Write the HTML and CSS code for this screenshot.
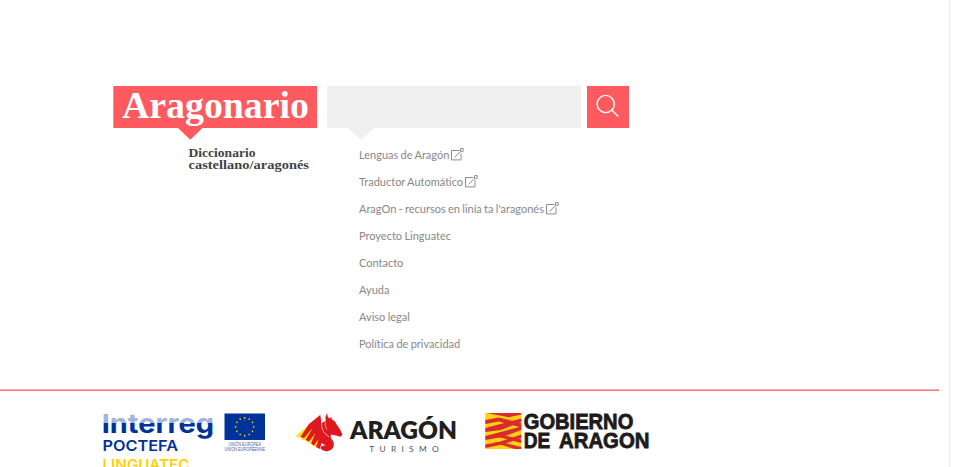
FILE: index.html
```html
<!DOCTYPE html>
<html lang="es">
<head>
<meta charset="utf-8">
<title>Aragonario</title>
<link rel="stylesheet" href="styles.css">
</head>
<body>
<svg class="defs" width="0" height="0" aria-hidden="true">
  <symbol id="external" viewBox="0 0 13 13">
    <path d="M8.300 2.500H.5v9.400h9.500V5.300M3.600 9.300 9.700 3.300M9.500.6h2.700v2.700H9.500z" fill="none" stroke="currentColor" stroke-width=".95"/>
  </symbol>
</svg>
<div class="page">
  <header class="search">
    <svg class="brand" viewBox="0 0 204 90" role="img">
      <path class="red" d="M.3 0H204v42h-114.500L77.300 53.700 65 42H.3z"/>
      <text class="brand-name" x="9" y="31.500" textLength="187" lengthAdjust="spacingAndGlyphs">Aragonario</text>
      <text class="brand-sub" x="75.500" y="70.500" textLength="67" lengthAdjust="spacingAndGlyphs">Diccionario</text>
      <text class="brand-sub" x="75.500" y="83.200" textLength="120.500" lengthAdjust="spacingAndGlyphs">castellano/aragonés</text>
    </svg>
    <div class="field">
      <input class="query" type="text" aria-label="Buscar">
      <svg class="pointer" viewBox="0 0 26 12"><path d="M0 0h26L13 12z"/></svg>
      <nav class="menu">
        <a>Lenguas de Aragón <svg class="ext"><use href="#external"/></svg></a>
        <a>Traductor Automático <svg class="ext"><use href="#external"/></svg></a>
        <a>AragOn - recursos en linía ta l'aragonés <svg class="ext"><use href="#external"/></svg></a>
        <a>Proyecto Linguatec</a>
        <a>Contacto</a>
        <a>Ayuda</a>
        <a>Aviso legal</a>
        <a>Política de privacidad</a>
      </nav>
    </div>
    <button class="submit" aria-label="Buscar">
      <svg viewBox="0 0 42 42"><circle cx="18.700" cy="18" r="8.600"/><path d="m25 24.200 6.300 6.400"/></svg>
    </button>
  </header>
  <footer class="sponsors">
    <svg class="interreg" viewBox="0 0 164 60">
      <defs><linearGradient id="two" gradientUnits="userSpaceOnUse" x1="0" y1="0" x2="0" y2="40"><stop offset=".24" stop-color="#a5b2dc"/><stop offset=".24" stop-color="#039"/></linearGradient></defs>
      <text class="inter" x="-1.300" y="19.700" textLength="112.300" lengthAdjust="spacingAndGlyphs" fill="url(#two)">Interreg</text>
      <text class="program" x="-.5" y="38" textLength="75.500" lengthAdjust="spacingAndGlyphs">POCTEFA</text>
      <text class="program yellow" x="-.5" y="56.700" textLength="87" lengthAdjust="spacingAndGlyphs">LINGUATEC</text>
      <path fill="#039" d="M121.500.5h40.500v26.500h-40.500z"/>
      <g fill="#fc0"><circle cx="141.700" cy="4.900" r=".85"/><circle cx="146.200" cy="6.100" r=".85"/><circle cx="149.500" cy="9.300" r=".85"/><circle cx="150.700" cy="13.800" r=".85"/><circle cx="149.500" cy="18.300" r=".85"/><circle cx="146.200" cy="21.500" r=".85"/><circle cx="141.700" cy="22.700" r=".85"/><circle cx="137.200" cy="21.500" r=".85"/><circle cx="133.900" cy="18.300" r=".85"/><circle cx="132.700" cy="13.800" r=".85"/><circle cx="133.900" cy="9.300" r=".85"/><circle cx="137.200" cy="6.100" r=".85"/></g>
      <text class="union" x="125.500" y="33.300" textLength="32.500" lengthAdjust="spacingAndGlyphs">UNIÓN EUROPEA</text>
      <text class="union" x="121.500" y="38.300" textLength="40.500" lengthAdjust="spacingAndGlyphs">UNION EUROPÉENNE</text>
    </svg>
    <svg class="turismo" viewBox="0 0 164 60">
      <path fill="#ffdf00" d="M24 2-.5 23.500l4.500.8L16 12 5 26.500l4 .7L18 17 10 28l4.500 2.500L20 24l-4 8 4 2.500 5-7z"/>
      <path fill="#df1820" d="M24.300 2 13 11 4.300 24.300 8 25l9-10.500L9.500 27l3.500 1.500L19.500 20 15 30.500l3 2L22.500 26 20 34l4 2 1.500-6 4.500 2.800c-3.500-.8-5.300.7-5.300 2.800 3 3.800 9 3.300 11.500.2 3.200-3.900 1-8-.7-9.900-1.200-1.800-1-3.500-.2-4.500 3 1 4.500.3 6.500 1.600l2.700.8 2-2.300C45 18 43 14.500 40.500 11.200 39.500 9 38 7.500 35.800 6.600L35.500 4 33.500 5.500C31.500 4 31 2.500 31.500 0 29.500 2 29 5 29.800 8L25.500 10z"/>
      <path fill="none" stroke="#fff" stroke-width=".6" d="M26 6.500c-.8 5-.3 9.500 2 13L33 24M29.500 9c-.7 3 0 5.500 1.500 7.500"/>
      <text class="aragon" x="54" y="26" textLength="107" lengthAdjust="spacingAndGlyphs">ARAGÓN</text>
      <text class="tourism" x="73.200" y="38.800" textLength="69.500">TURISMO</text>
    </svg>
    <svg class="gobierno" viewBox="0 0 170 60">
      <g transform="translate(-.2 -1)">
      <path fill="#fcd116" d="M.5 1h36v36H.5z"/>
      <g fill="#dc2b2c"><path d="M2 1h34.500v1.500L24 5.200z"/><path d="M.5 8 14 5.500 36.500 11v4.500L14 9.500.5 12z"/><path d="M.5 16 36.500 6.500V10L16 18 .5 20z"/><path d="M.5 24 36.500 14.500V18L18 25 .5 28z"/><path d="M14 22l22.500 5.500V31L10 24z"/><path d="M.5 32.500 14 30l22.500-7.500V26L20 32 .5 36z"/><path d="M9 30.500l7-.5 20.500 5v2H30z"/></g>
      </g>
      <text class="gov" x="38.800" y="15.500" textLength="109.500" lengthAdjust="spacingAndGlyphs">GOBIERNO</text>
      <text class="gov" x="38.800" y="35.300" textLength="26.500" lengthAdjust="spacingAndGlyphs">DE</text>
      <text class="gov" x="74" y="35.300" textLength="90.500" lengthAdjust="spacingAndGlyphs">ARAGON</text>
    </svg>
  </footer>
</div>
</body>
</html>
```
FILE: styles.css
```css
* { box-sizing: border-box; }
body { margin: 0; background: #fff; overflow: hidden; }
.defs { display: block; height: 0; }
.page { width: 950px; height: 467px; overflow: hidden; border-right: 1px solid #ececec; font-family: Lato, sans-serif; }
.search { display: flex; align-items: flex-start; height: 390px; padding: 86px 0 0 113px; }
svg { display: block; flex: none; overflow: visible; }
.brand { width: 204px; height: 90px; margin-right: 10px; }
.red { fill: #ff5a5f; }
.brand-name { font: bold 37px "Liberation Serif", serif; fill: #fff; }
.brand-sub { font: bold 12.500px "Liberation Serif", serif; fill: #444; }
.field { width: 254px; margin-right: 6px; }
.query { display: block; width: 254px; height: 42px; padding: 0 12px; border: 0; background: #f0f0f0; outline: 0; }
.pointer { width: 26px; height: 12px; margin-left: 21px; fill: #f0f0f0; }
.menu { display: flex; flex-direction: column; padding: 1px 0 0 32px; }
.menu a { display: flex; align-items: center; gap: 2px; height: 27px; font-size: 11px; line-height: 27px; word-spacing: -.5px; font-variant-ligatures: none; color: #888; white-space: nowrap; }
.ext { width: 13px; height: 13px; }
.submit { width: 42px; height: 42px; padding: 0; border: 0; background: #ff5a5f; }
.submit svg { width: 42px; height: 42px; fill: none; stroke: #fff; stroke-width: 1.4; }
.sponsors { display: flex; width: 939px; height: 77px; padding: 22px 0 0 103px; border-top: 1px solid #ff7478; box-shadow: 0 -1px #ffb5b7; }
.interreg { width: 164px; height: 60px; margin-right: 29px; }
.turismo { width: 164px; height: 60px; margin-right: 25px; }
.gobierno { width: 170px; height: 60px; }
.inter { font: bold 26px Inter, sans-serif; }
.program { font: 600 14.800px Inter, sans-serif; fill: #039; }
.yellow { fill: #ffd200; }
.union { font: 4.500px "Liberation Sans", sans-serif; fill: #4164ad; }
.aragon { font: 800 24.500px Lato, sans-serif; fill: #202020; }
.tourism { font: 8.400px Lato, sans-serif; fill: #555; }
.gov { font: bold 21.500px "Liberation Sans", sans-serif; fill: #211a1b; stroke: #211a1b; stroke-width: .8px; }
```
